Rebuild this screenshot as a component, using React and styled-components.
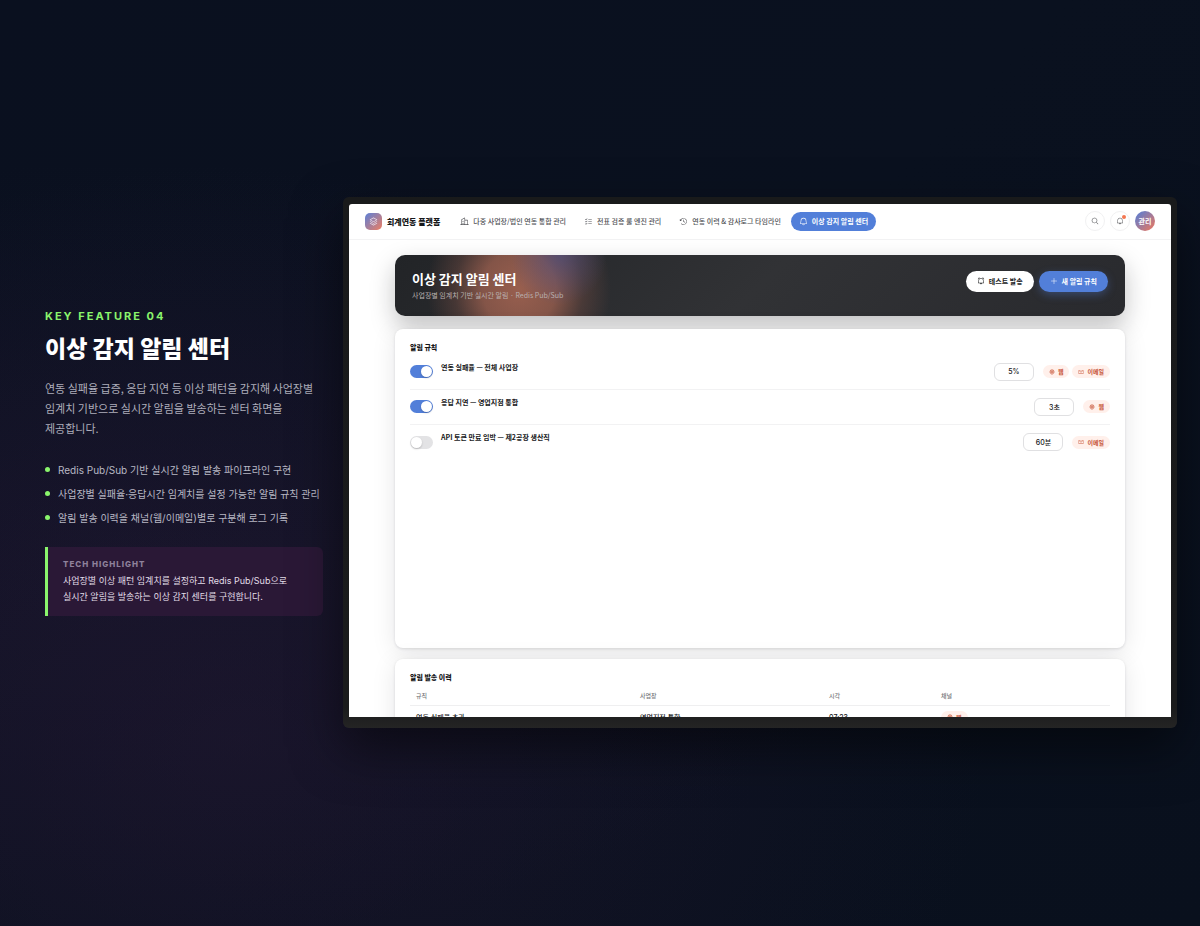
import React from "react";
import styled, { createGlobalStyle } from "styled-components";
import {
  PiBuildings,
  PiListChecks,
  PiClockCounterClockwise,
  PiBell,
  PiMagnifyingGlass,
  PiStack,
  PiPlus,
  PiGlobe,
  PiEnvelopeSimple,
  PiBellRinging,
} from "react-icons/pi";

const koreanFirst = `"Noto Sans CJK KR", Inter, sans-serif`;

const GlobalStyle = createGlobalStyle`
  * {
    box-sizing: border-box;
  }
  body {
    margin: 0;
    background: #0a111f;
    font-family: Inter, "Noto Sans CJK KR", sans-serif;
    word-break: keep-all;
  }
  h1, h2, h3, p, ul {
    margin: 0;
    padding: 0;
  }
  button, input {
    font-family: inherit;
  }
`;

const Slide = styled.main`
  min-height: 100vh;
  display: grid;
  grid-template-columns: 278px minmax(0, 1fr);
  align-items: center;
  gap: 20px;
  padding: 0 23px 2px 45px;
  background:
    radial-gradient(ellipse at 20% 80%, rgba(46, 26, 58, 0.36), transparent 55%),
    radial-gradient(ellipse at 10% 60%, rgba(26, 22, 46, 0.5), transparent 50%),
    linear-gradient(135deg, #0a101f 0%, #0a111f 50%, #09101d 100%);
`;

const Intro = styled.section``;

const Eyebrow = styled.p`
  color: #8af56c;
  font-size: 11px;
  font-weight: 700;
  line-height: 14px;
  letter-spacing: 2px;
`;

const Title = styled.h1`
  margin-top: 7px;
  color: #fff;
  font-family: ${koreanFirst};
  font-size: 23px;
  font-weight: 800;
  line-height: 34px;
`;

const Lead = styled.p`
  margin-top: 14px;
  color: #aeaebb;
  font-family: ${koreanFirst};
  font-size: 11px;
  line-height: 20px;
`;

const Points = styled.ul`
  display: grid;
  gap: 8px;
  margin-top: 24px;
  list-style: none;
`;

const Point = styled.li`
  display: flex;
  align-items: center;
  gap: 8px;
  color: #b8b8c4;
  font-size: 10px;
  line-height: 16px;
  white-space: nowrap;

  &::before {
    content: "";
    width: 5px;
    height: 5px;
    border-radius: 50%;
    background: #8af56c;
  }
`;

const Highlight = styled.div`
  margin-top: 21px;
  padding: 10px 15px 11px;
  border-left: 3px solid #8af56c;
  border-radius: 0 6px 6px 0;
  background: #2a1836;
`;

const HighlightLabel = styled.p`
  color: #8e819b;
  font-size: 8px;
  font-weight: 800;
  line-height: 14px;
  letter-spacing: 1px;
`;

const HighlightText = styled.p`
  margin-top: 2px;
  color: #e2dde8;
  font-size: 9px;
  line-height: 16px;
`;

const Monitor = styled.section`
  min-width: 0;
  padding: 7px 6px 11px;
  border-radius: 6px;
  background: linear-gradient(#191a1b, #1a1b1c 96%, #242424);
  box-shadow: 0 20px 50px rgba(0, 0, 0, 0.5);
`;

const Screen = styled.div`
  height: 513px;
  overflow: hidden;
  border-radius: 3px 3px 0 0;
  background: #fff;
  color: #17181a;
`;

const TopBar = styled.header`
  display: flex;
  align-items: center;
  height: 36px;
  padding: 0 16px;
  border-bottom: 1px solid #f3f3f4;
`;

const Logo = styled.span`
  display: grid;
  place-items: center;
  width: 17px;
  height: 17px;
  border-radius: 5px;
  background: linear-gradient(135deg, #5b80d8, #ee7e62);
  color: #f1e6ee;
  font-size: 9px;
`;

const Brand = styled.strong`
  margin: 0 12px 0 5px;
  font-size: 8px;
  font-weight: 800;
`;

const Nav = styled.nav`
  display: flex;
  gap: 2px;
`;

const NavLink = styled.a`
  display: flex;
  align-items: center;
  gap: 4px;
  height: 19px;
  padding: 0 8px;
  border-radius: 10px;
  background: ${(props) => (props.$active ? "#527fd9" : "transparent")};
  color: ${(props) => (props.$active ? "#fff" : "#505156")};
  font-family: ${koreanFirst};
  font-size: 7px;
  font-weight: ${(props) => (props.$active ? 700 : 500)};
  text-decoration: none;
  white-space: nowrap;

  svg {
    font-size: 9px;
  }
`;

const Tools = styled.div`
  display: flex;
  gap: 5px;
  margin-left: auto;
`;

const RoundButton = styled.button`
  position: relative;
  display: grid;
  place-items: center;
  width: 20px;
  height: 20px;
  padding: 0;
  border: 1px solid #f1f1f2;
  border-radius: 50%;
  background: #fff;
  color: #55565a;
  font-size: 8px;
`;

const Dot = styled.span`
  position: absolute;
  top: 3px;
  right: 3px;
  width: 4px;
  height: 4px;
  border-radius: 50%;
  background: #f47751;
`;

const Avatar = styled.button`
  width: 20px;
  height: 20px;
  padding: 0;
  border: 0;
  border-radius: 50%;
  background: linear-gradient(135deg, #4f7edb, #f2775a);
  color: #fff;
  font-size: 7px;
  font-weight: 700;
`;

const Content = styled.div`
  display: grid;
  gap: 13px;
  padding: 15px 46px 0;
`;

const Cards = styled.div`
  display: grid;
  gap: 11px;
`;

const Hero = styled.section`
  display: flex;
  justify-content: space-between;
  align-items: flex-start;
  height: 61px;
  padding: 15px 17px;
  border-radius: 10px;
  background:
    radial-gradient(ellipse 48px 50px at 164px 0, rgba(78, 82, 140, 0.6), transparent 100%),
    radial-gradient(ellipse 92px 96px at 124px 34px, rgba(172, 104, 84, 0.85), rgba(164, 100, 82, 0.74) 40%, rgba(120, 78, 68, 0.4) 70%, transparent 100%),
    linear-gradient(135deg, #222427, #313235 50%, #292a2e);
  box-shadow: 0 10px 24px rgba(20, 20, 25, 0.26);
  color: #fff;
`;

const HeroTitle = styled.h2`
  font-family: ${koreanFirst};
  font-size: 13px;
  font-weight: 700;
  line-height: 18px;
`;

const HeroText = styled.p`
  color: #b9b1b0;
  font-family: ${koreanFirst};
  font-size: 7px;
  line-height: 14px;
`;

const Actions = styled.div`
  display: flex;
  gap: 5px;
`;

const ActionButton = styled.button`
  display: flex;
  align-items: center;
  justify-content: center;
  gap: 4px;
  height: 21px;
  margin-top: 1px;
  padding: 0 11px;
  border: 0;
  border-radius: 11px;
  background: ${(props) => (props.$primary ? "#527fd9" : "#fff")};
  box-shadow: ${(props) => (props.$primary ? "0 3px 8px rgba(82, 127, 217, 0.35)" : "none")};
  color: ${(props) => (props.$primary ? "#fff" : "#17181a")};
  font-family: ${koreanFirst};
  font-size: 7px;
  font-weight: 700;

  svg {
    font-size: 8px;
  }
`;

const Card = styled.section`
  min-height: ${(props) => (props.$tall ? "319px" : "0")};
  padding: 12px 15px;
  border-radius: 8px;
  background: #fff;
  box-shadow: 0 1px 3px rgba(20, 20, 25, 0.12), 0 4px 24px rgba(20, 20, 25, 0.1);
`;

const CardTitle = styled.h3`
  font-size: 7px;
  font-weight: 800;
  line-height: 13px;
`;

const Rules = styled.ul`
  margin-top: 1px;
  list-style: none;
`;

const Rule = styled.li`
  display: flex;
  align-items: center;
  height: 35px;
  border-bottom: 1px solid #f2f2f3;

  &:last-child {
    border-bottom: 0;
  }
`;

const Toggle = styled.input`
  appearance: none;
  flex: none;
  display: flex;
  width: 23px;
  height: 13px;
  margin: 0 8px 0 0;
  padding: 1px;
  border-radius: 7px;
  background: #e3e3e5;

  &::before {
    content: "";
    width: 11px;
    height: 11px;
    border-radius: 50%;
    background: #fff;
    box-shadow: 0 1px 2px rgba(0, 0, 0, 0.2);
  }

  &:checked {
    justify-content: flex-end;
    background: #527fd9;
  }
`;

const RuleName = styled.label`
  flex: 1;
  padding-bottom: 10px;
  font-family: ${koreanFirst};
  font-size: 7px;
  font-weight: 700;
  line-height: 10px;
`;

const Threshold = styled.input`
  width: 40px;
  height: 18px;
  margin-right: 9px;
  padding: 0;
  border: 1px solid #e0e0e2;
  border-radius: 6px;
  background: #fff;
  color: #17181a;
  font-size: 7px;
  font-weight: 500;
  text-align: center;
`;

const Channels = styled.div`
  display: flex;
  gap: 3px;
`;

const Chip = styled.span`
  display: inline-flex;
  align-items: center;
  gap: 3px;
  height: 13px;
  padding: 0 6px;
  border-radius: 7px;
  background: #fff0eb;
  color: #c65336;
  font-size: 6px;
  font-weight: 700;
  white-space: nowrap;
`;

const History = styled.table`
  width: 100%;
  border-collapse: collapse;
  table-layout: fixed;
  font-size: 7px;

  th, td {
    padding: 0 6px;
    text-align: left;
    white-space: nowrap;
  }
  th {
    height: 22px;
    padding-top: 2px;
    border-bottom: 1px solid #efeff0;
    color: #77787c;
    font-size: 6px;
    font-weight: 500;
  }
  td {
    height: 23px;
    font-weight: 500;
  }
`;

const navItems = [
  { label: "다중 사업장/법인 연동 통합 관리", icon: PiBuildings },
  { label: "전표 검증 룰 엔진 관리", icon: PiListChecks },
  { label: "연동 이력 & 감사로그 타임라인", icon: PiClockCounterClockwise },
  { label: "이상 감지 알림 센터", icon: PiBell, active: true },
];

const points = [
  "Redis Pub/Sub 기반 실시간 알림 발송 파이프라인 구현",
  "사업장별 실패율·응답시간 임계치를 설정 가능한 알림 규칙 관리",
  "알림 발송 이력을 채널(웹/이메일)별로 구분해 로그 기록",
];

const rules = [
  { id: "fail", name: "연동 실패율 — 전체 사업장", value: "5%", channels: ["웹", "이메일"], on: true },
  { id: "delay", name: "응답 지연 — 영업지점 통합", value: "3초", channels: ["웹"], on: true },
  { id: "token", name: "API 토큰 만료 임박 — 제2공장 생산직", value: "60분", channels: ["이메일"], on: false },
];

const Channel = ({ name }) => (
  <Chip>
    {name === "웹" ? <PiGlobe /> : <PiEnvelopeSimple />}
    {name}
  </Chip>
);

const App = () => {
  return (
    <>
      <GlobalStyle />
      <Slide>
        <Intro>
          <Eyebrow>KEY FEATURE 04</Eyebrow>
          <Title>이상 감지 알림 센터</Title>
          <Lead>
            연동 실패율 급증, 응답 지연 등 이상 패턴을 감지해 사업장별 임계치 기반으로 실시간 알림을 발송하는 센터 화면을 제공합니다.
          </Lead>
          <Points>
            {points.map((text) => (
              <Point key={text}>{text}</Point>
            ))}
          </Points>
          <Highlight>
            <HighlightLabel>TECH HIGHLIGHT</HighlightLabel>
            <HighlightText>
              사업장별 이상 패턴 임계치를 설정하고 Redis Pub/Sub으로 실시간 알림을 발송하는 이상 감지 센터를 구현합니다.
            </HighlightText>
          </Highlight>
        </Intro>

        <Monitor>
          <Screen>
            <TopBar>
              <Logo><PiStack /></Logo>
              <Brand>회계연동 플랫폼</Brand>
              <Nav>
                {navItems.map(({ label, icon: Icon, active }) => (
                  <NavLink key={label} href="#" $active={active}>
                    <Icon />
                    {label}
                  </NavLink>
                ))}
              </Nav>
              <Tools>
                <RoundButton aria-label="검색"><PiMagnifyingGlass /></RoundButton>
                <RoundButton aria-label="알림"><PiBell /><Dot /></RoundButton>
                <Avatar>관리</Avatar>
              </Tools>
            </TopBar>

            <Content>
              <Hero>
                <div>
                  <HeroTitle>이상 감지 알림 센터</HeroTitle>
                  <HeroText>사업장별 임계치 기반 실시간 알림 · Redis Pub/Sub</HeroText>
                </div>
                <Actions>
                  <ActionButton><PiBellRinging />테스트 발송</ActionButton>
                  <ActionButton $primary><PiPlus />새 알림 규칙</ActionButton>
                </Actions>
              </Hero>

              <Cards>
                <Card $tall>
                  <CardTitle>알림 규칙</CardTitle>
                  <Rules>
                    {rules.map((rule) => (
                      <Rule key={rule.id}>
                        <Toggle type="checkbox" id={rule.id} defaultChecked={rule.on} />
                        <RuleName htmlFor={rule.id}>{rule.name}</RuleName>
                        <Threshold aria-label={`${rule.name} 임계치`} defaultValue={rule.value} />
                        <Channels>
                          {rule.channels.map((name) => (
                            <Channel key={name} name={name} />
                          ))}
                        </Channels>
                      </Rule>
                    ))}
                  </Rules>
                </Card>

                <Card>
                  <CardTitle>알림 발송 이력</CardTitle>
                  <History>
                    <colgroup>
                      <col width="32%" />
                      <col width="27%" />
                      <col width="16%" />
                      <col width="25%" />
                    </colgroup>
                    <thead>
                      <tr>
                        <th>규칙</th>
                        <th>사업장</th>
                        <th>시각</th>
                        <th>채널</th>
                      </tr>
                    </thead>
                    <tbody>
                      <tr>
                        <td>연동 실패율 초과</td>
                        <td>영업지점 통합</td>
                        <td>07:23</td>
                        <td><Channel name="웹" /></td>
                      </tr>
                    </tbody>
                  </History>
                </Card>
              </Cards>
            </Content>
          </Screen>
        </Monitor>
      </Slide>
    </>
  );
};

export default App;
